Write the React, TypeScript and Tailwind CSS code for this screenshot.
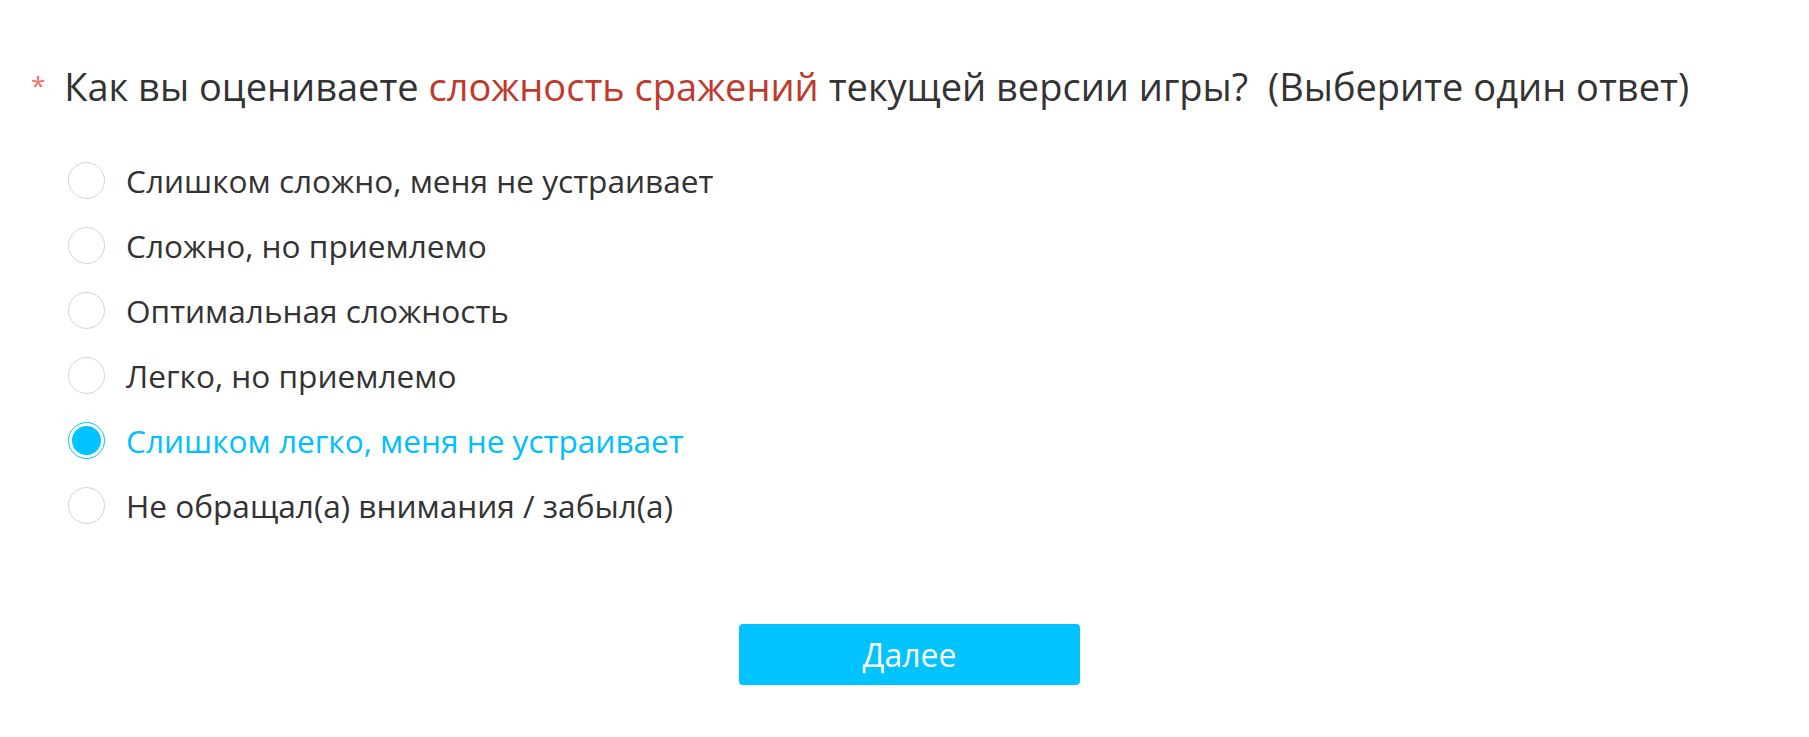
import { useState } from 'react'

const options = [
  'Слишком сложно, меня не устраивает',
  'Сложно, но приемлемо',
  'Оптимальная сложность',
  'Легко, но приемлемо',
  'Слишком легко, меня не устраивает',
  'Не обращал(а) внимания / забыл(а)',
]

export default function App() {
  const [selected, setSelected] = useState(4)

  return (
    <div className="min-h-screen bg-white font-['Open_Sans',sans-serif] text-[#333333]">
      <div className="pl-[10px] pt-[62px]">
        <div className="flex items-start pl-[21px]">
          <span className="mr-[19px] mt-[10px] text-[26px] leading-none text-[#f56c6c]">*</span>
          <h1 className="text-[38px] leading-[48px]">
            Как вы оцениваете <span className="text-[#c0392b]">сложность сражений</span> текущей версии игры?{' '}
            &nbsp;(Выберите один ответ)
          </h1>
        </div>

        <ul className="mt-[38px] pl-[58px]">
          {options.map((label, i) => {
            const isOn = i === selected
            return (
              <li
                key={label}
                className="flex h-[65px] cursor-pointer items-center gap-[21px]"
                onClick={() => setSelected(i)}
              >
                {isOn ? (
                  <span className="flex h-[37px] w-[37px] items-center justify-center rounded-full border border-[#00c3ff] bg-white">
                    <span className="h-[29px] w-[29px] rounded-full bg-[#00c3ff]" />
                  </span>
                ) : (
                  <span className="h-[37px] w-[37px] rounded-full border border-[#d4d4d4] bg-white" />
                )}
                <span className={'text-[31.6px] ' + (isOn ? 'text-[#00bfff]' : 'text-[#333333]')}>{label}</span>
              </li>
            )
          })}
        </ul>

        <div className="mt-[86px] flex justify-center">
          <button className="h-[61px] w-[341px] rounded-[4px] bg-[#00c3ff] text-[32px] text-white">Далее</button>
        </div>
      </div>
    </div>
  )
}
